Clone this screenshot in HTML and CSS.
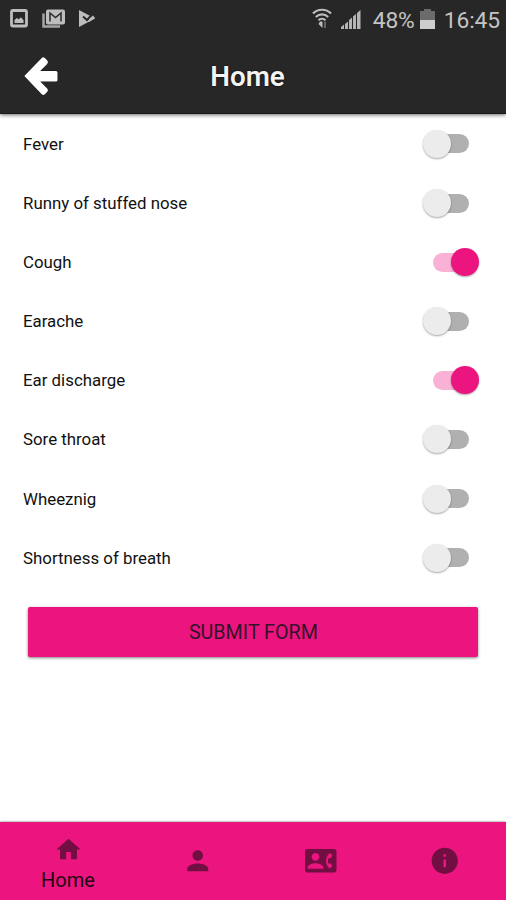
FILE: index.html
```html
<!DOCTYPE html>
<html lang="en">
<head>
<meta charset="utf-8">
<title>Home</title>
<link rel="stylesheet" href="styles.css">
</head>
<body>
<div class="screen">
  <header class="header">
    <div class="status">
      <div class="notifications">
        <svg width="18" height="19" viewBox="0 0 18 19"><rect x="1.500" y="1.500" width="15" height="15.500" rx="1.500" fill="none" stroke="#bdbdbd" stroke-width="2.800"/><path d="M4.500 14v-3l2.300-2 2 1.300 2.200-2 2.500 3V14z" fill="#bdbdbd"/></svg>
        <svg width="24" height="20" viewBox="0 0 24 20"><path d="M1.500 4.500V17.500H18" fill="none" stroke="#a5a5a5" stroke-width="2.500"/><rect x="4" y=".5" width="19" height="15" rx="2" fill="#bdbdbd"/><path d="M8 12.500V4l5.500 4.500L19 4v8.500" fill="none" stroke="#292929" stroke-width="1.500"/></svg>
        <svg width="18" height="19" viewBox="0 0 18 19"><path d="M1 1l16 8.500L1 18z" fill="#bdbdbd"/><path d="M5 7.500l4 3.500L16 3.500" fill="none" stroke="#292929" stroke-width="2"/><path d="M11 10.500l4-4 2 2.500-6 4z" fill="#bdbdbd"/></svg>
      </div>
      <div class="indicators">
        <svg class="wifi" width="20" height="21" viewBox="0 0 20 21"><g fill="none" stroke="#bdbdbd" stroke-width="2.200"><path d="M1 5.500C6 .5 14 .5 19 5.500M3.800 9C7.500 5.500 12.500 5.500 16.200 9M6.500 12.200c2-1.800 5-1.800 7 0"/></g><path d="M8 13.500h2.500V20L6.500 16z" fill="#bdbdbd"/><path d="M12 13.500h2V20h-2z" fill="#666"/></svg>
        <svg class="signal" width="20" height="19" viewBox="0 0 20 19"><path d="M0 19v-2l3-2.500V19zM4 19v-5l3-2.500V19zM8 19v-9l3-2.500V19zM12 19V6.500L15 4v15zM16 19V3l3.500-3v19z" fill="#b5b5b5"/></svg>
        <span class="percent">48%</span>
        <svg class="battery" width="15" height="20" viewBox="0 0 15 20"><path d="M4 0h7v2h4v9H0V2h4z" fill="#6b6b6b"/><path d="M0 11h15v9H0z" fill="#cecece"/></svg>
        <span class="time">16:45</span>
      </div>
    </div>
    <div class="toolbar">
      <svg class="back" width="38" height="42" viewBox="0 0 38 42"><path d="M2.300 21 19.500 3.200q1.800-1.700 3.600.1l2 2q1.800 1.800.1 3.700L18.200 16H34q1.500 0 1.500 1.500V25q0 1.500-1.500 1.500H18.200l7 7q1.700 1.800-.1 3.600l-2 2q-1.800 1.700-3.600 0z" fill="#fff" stroke="#151515" stroke-width="1" paint-order="stroke"/></svg>
      <h1 class="title">Home</h1>
    </div>
  </header>
  <main class="content">
    <div class="row"><span>Fever</span><i class="switch"></i></div>
    <div class="row"><span>Runny of stuffed nose</span><i class="switch"></i></div>
    <div class="row"><span>Cough</span><i class="switch on"></i></div>
    <div class="row"><span>Earache</span><i class="switch"></i></div>
    <div class="row"><span>Ear discharge</span><i class="switch on"></i></div>
    <div class="row"><span>Sore throat</span><i class="switch"></i></div>
    <div class="row"><span>Wheeznig</span><i class="switch"></i></div>
    <div class="row"><span>Shortness of breath</span><i class="switch"></i></div>
    <button class="submit">SUBMIT FORM</button>
  </main>
  <nav class="tabs">
    <a class="tab active"><svg viewBox="0 0 24 24"><path d="M10 20v-6h4v6h5v-8h3L12 3 2 12h3v8z"/></svg><span>Home</span></a>
    <a class="tab"><svg viewBox="0 0 24 24"><path d="M12 12c2.210 0 4-1.790 4-4s-1.790-4-4-4-4 1.790-4 4 1.790 4 4 4zm0 2c-2.670 0-8 1.340-8 4v2h16v-2c0-2.660-5.330-4-8-4z"/></svg></a>
    <a class="tab"><svg viewBox="0 0 24 24"><path d="M22 3H2C.9 3 0 3.900 0 5v14c0 1.100.9 2 2 2h20c1.100 0 1.990-.9 1.990-2L24 5c0-1.100-.9-2-2-2zM8 6c1.660 0 3 1.340 3 3s-1.340 3-3 3-3-1.340-3-3 1.340-3 3-3zm6 12H2v-1c0-2 4-3.100 6-3.100s6 1.100 6 3.100v1zm3.850-4h1.640L21 16l-1.990 1.990c-1.310-.98-2.280-2.380-2.730-3.990-.18-.64-.28-1.310-.28-2s.1-1.360.28-2c.45-1.620 1.420-3.010 2.730-3.990L21 8l-1.510 2h-1.640c-.22.63-.35 1.300-.35 2s.13 1.370.35 2z"/></svg></a>
    <a class="tab"><svg viewBox="0 0 24 24"><path d="M12 2C6.480 2 2 6.480 2 12s4.480 10 10 10 10-4.480 10-10S17.520 2 12 2zm1 15h-2v-6h2v6zm0-8h-2V7h2v2z"/></svg></a>
  </nav>
</div>
</body>
</html>
```

FILE: styles.css
```css
* { box-sizing: border-box; }
body { margin: 0; font-family: Roboto, "Liberation Sans", sans-serif; color: #111; background: #fff; }
svg { display: block; flex: none; }
.screen { height: 900px; width: 506px; display: flex; flex-direction: column; overflow: hidden; }

.header { height: 114px; background: #272727; border-bottom: 1px solid #1a1a1a; box-shadow: 0 1px 4px rgba(0, 0, 0, .6); }
.status { height: 40px; display: flex; justify-content: space-between; padding: 0 6px 0 10px; color: #c4c4c4; font-size: 22.8px; }
.notifications { display: flex; gap: 14px; padding-top: 9px; }
.notifications svg:nth-child(2) { margin-right: -2px; }
.indicators { display: flex; align-items: center; }
.wifi { margin-top: -3px; }
.signal { margin: -2px 0 0 9px; }
.percent { margin-left: 12px; }
.battery { margin: -3px 9px 0 5px; }
.indicators { letter-spacing: -.1px; }
.toolbar { height: 73px; display: grid; grid-template-columns: 60px 1fr 71px; align-items: center; }
.back { margin-left: 22px; margin-top: -1px; }
.title { margin: 0; text-align: center; color: #f4f4f4; font-size: 27.8px; font-weight: 600; line-height: 32px; text-shadow: 0 0 2px #000; }

.content { flex: 1; padding-top: .4px; }
.row { height: 59.1px; display: flex; align-items: center; justify-content: space-between; padding: 0 26px 0 23px; font-size: 16.85px; }
.switch { width: 58px; height: 28px; padding: 0 1px; display: flex; align-items: center; }
.switch::before { content: ""; width: 28px; height: 28px; border-radius: 50%; background: #ececec; box-shadow: 0 1px 2px rgba(0, 0, 0, .35); z-index: 1; }
.switch::after { content: ""; width: 35px; height: 19px; border-radius: 10px; background: #b0b0b0; margin-left: -17px; }
.switch.on { flex-direction: row-reverse; }
.switch.on::before { background: #ec147f; }
.switch.on::after { background: #f9b2d5; margin: 0 -17px 0 0; }
.submit { display: block; width: 450px; height: 50px; margin: 19.800px 0 0 28.4px; padding: 2px 0 0; border: 0; border-radius: 2px; background: #ec147f; color: #35122a; font: 19.700px Roboto, sans-serif; box-shadow: 0 1px 3px rgba(0, 0, 0, .5); }

.tabs { height: 78px; display: grid; grid-template-columns: 136px 123px 124px 1fr; background: #ec147f; box-shadow: 0 0 2px rgba(0, 0, 0, .6); }
.tab { display: flex; flex-direction: column; align-items: center; justify-content: center; color: #1c0713; font-size: 20px; }
.tab svg { width: 31.5px; height: 31.5px; fill: #710e42; }
.tab.active { justify-content: flex-start; padding-top: 13px; }
.tab.active svg { width: 29px; height: 29px; }
.tab span { line-height: 24px; margin-top: 4px; }
```
